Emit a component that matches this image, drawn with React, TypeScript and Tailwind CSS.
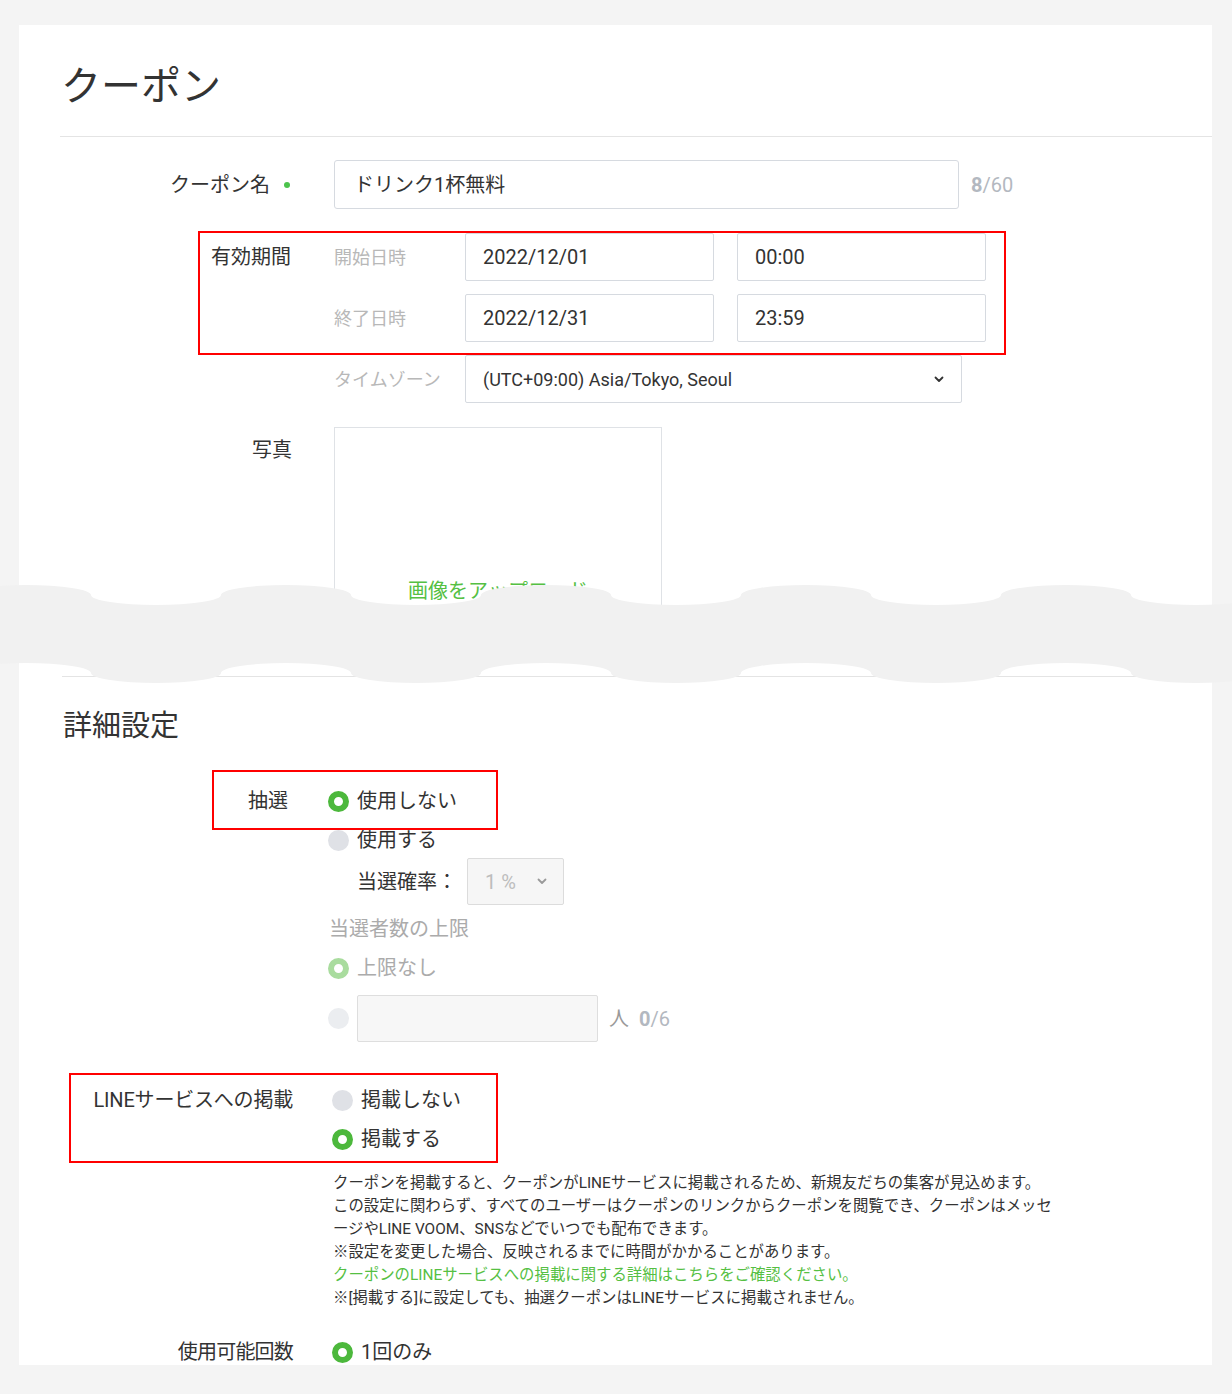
import type { ReactNode } from 'react';

type RadioState = 'on' | 'off' | 'onDisabled' | 'offDisabled';

function Radio({ state }: Readonly<{ state: RadioState }>) {
  const cls = {
    on: 'border-[6px] border-[#4cb83c] bg-white',
    onDisabled: 'border-[6px] border-[#a9dc9e] bg-white',
    off: 'bg-[#dfe1e6]',
    offDisabled: 'bg-[#ebedf0]',
  }[state];
  return <span className={`block w-[21px] h-[21px] shrink-0 rounded-full ${cls}`} />;
}

function RadioRow({ state, label, h, muted }: Readonly<{ state: RadioState; label: string; h: string; muted?: boolean }>) {
  return (
    <div className={`flex items-center ${h}`}>
      <Radio state={state} />
      <span className={`ml-[8px] text-[20px] ${muted ? 'text-[#ababab]' : 'text-[#333]'}`}>{label}</span>
    </div>
  );
}

function Chevron({ color }: Readonly<{ color: string }>) {
  return (
    <svg width="10" height="7" viewBox="0 0 10 7">
      <polyline points="1.5,1.5 5,5 8.5,1.5" fill="none" stroke={color} strokeWidth="1.8" strokeLinecap="round" strokeLinejoin="round" />
    </svg>
  );
}

function Field({ children, w }: Readonly<{ children: ReactNode; w: string }>) {
  return (
    <div className={`${w} h-[48px] flex items-center pl-[17px] border border-[#d6dae0] rounded-[2px] bg-white text-[20px] text-[#333]`}>
      {children}
    </div>
  );
}

// wavy "torn" band drawn across the panel
function TornBand() {
  const xs: number[] = [];
  for (let x = -39; x < 1300; x += 130) xs.push(x);
  let d = 'M -39 15';
  xs.forEach((x, i) => {
    d += ` A 65 10 0 0 ${i % 2 === 0 ? 1 : 0} ${x + 130} 15`;
  });
  const last = xs[xs.length - 1] + 130;
  d += ` L ${last} 93`;
  for (let i = xs.length - 1; i >= 0; i--) {
    d += ` A 65 10 0 0 ${i % 2 === 0 ? 0 : 1} ${xs[i]} 93`;
  }
  d += ' Z';
  return (
    <svg className="absolute left-0 top-[580px]" width="1232" height="105" viewBox="0 0 1232 105">
      <path d={d} fill="#f1f1f1" />
    </svg>
  );
}

const NOTES = [
  'クーポンを掲載すると、クーポンがLINEサービスに掲載されるため、新規友だちの集客が見込めます。',
  'この設定に関わらず、すべてのユーザーはクーポンのリンクからクーポンを閲覧でき、クーポンはメッセ',
  'ージやLINE VOOM、SNSなどでいつでも配布できます。',
  '※設定を変更した場合、反映されるまでに時間がかかることがあります。',
  'クーポンのLINEサービスへの掲載に関する詳細はこちらをご確認ください。',
  '※[掲載する]に設定しても、抽選クーポンはLINEサービスに掲載されません。',
];

export default function App() {
  return (
    <div className="relative w-[1232px] h-[1394px] bg-[#f4f4f4] pt-[25px] font-[Roboto,'Noto_Sans_CJK_JP',sans-serif] text-[#333]">
      <div className="ml-[19px] w-[1193px] bg-white">
        {/* upper part */}
        <div className="h-[615px] overflow-hidden">
          <div className="pt-[38px] pl-[42px] text-[40px] leading-[48px] text-[#333]">クーポン</div>
          <div className="mt-[25px] ml-[41px] h-px bg-[#e4e4e4]" />

          <div className="mt-[23px] flex items-center">
            <div className="w-[273px] pr-[2px] flex justify-end items-center">
              <span className="text-[20px]">クーポン名</span>
              <span className="ml-[14px] w-[6px] h-[6px] rounded-full bg-[#4cc34c]" />
            </div>
            <div className="ml-[42px] w-[625px] h-[49px] flex items-center pl-[19px] border border-[#d6dae0] rounded-[3px] text-[20px]">
              ドリンク1杯無料
            </div>
            <div className="ml-[12px] text-[20px] text-[#b3b8c0]">
              <span className="font-bold">8</span>/60
            </div>
          </div>

          <div className="mt-[24px] flex">
            <div className="w-[273px] pr-[1px] text-right text-[20px] leading-[48px]">有効期間</div>
            <div className="ml-[42px] flex flex-col gap-[13px]">
              <div className="flex items-center">
                <div className="w-[131px] text-[18px] text-[#b8b8b8]">開始日時</div>
                <Field w="w-[249px]">2022/12/01</Field>
                <div className="ml-[23px]">
                  <Field w="w-[249px]">00:00</Field>
                </div>
              </div>
              <div className="flex items-center">
                <div className="w-[131px] text-[18px] text-[#b8b8b8]">終了日時</div>
                <Field w="w-[249px]">2022/12/31</Field>
                <div className="ml-[23px]">
                  <Field w="w-[249px]">23:59</Field>
                </div>
              </div>
              <div className="flex items-center">
                <div className="w-[131px] text-[18px] text-[#b8b8b8]">タイムゾーン</div>
                <div className="w-[497px] h-[48px] flex items-center justify-between pl-[17px] pr-[17px] border border-[#d6dae0] rounded-[2px] text-[18px]">
                  <span>(UTC+09:00) Asia/Tokyo, Seoul</span>
                  <Chevron color="#333" />
                </div>
              </div>
            </div>
          </div>

          <div className="mt-[24px] flex items-start">
            <div className="w-[273px] mt-[9px] text-right text-[20px] leading-[28px]">写真</div>
            <div className="ml-[42px] w-[328px] h-[260px] border border-[#dfe2e6] flex justify-center pt-[149px]">
              <span className="text-[20px] leading-[28px] text-[#55c043]">画像をアップロード</span>
            </div>
          </div>
        </div>

        {/* lower part */}
        <div className="h-[725px] overflow-hidden pt-[36px]">
          <div className="ml-[43px] h-px bg-[#e4e4e4]" />
          <div className="mt-[29px] pl-[44px] text-[29px] leading-[40px]">詳細設定</div>

          <div className="mt-[34px] flex">
            <div className="w-[269px] text-right text-[20px] leading-[42px]">抽選</div>
            <div className="ml-[40px] flex flex-col">
              <RadioRow state="on" label="使用しない" h="h-[42px]" />
              <RadioRow state="off" label="使用する" h="h-[36px]" />
              <div className="h-[47px] flex items-center pl-[29px]">
                <span className="text-[20px]">当選確率：</span>
                <div className="ml-[10px] w-[97px] h-[47px] flex items-center justify-between pl-[17px] pr-[16px] bg-[#f6f6f6] border border-[#dcdcdc] rounded-[2px]">
                  <span className="text-[20px] text-[#bdbdbd]">1 %</span>
                  <Chevron color="#9a9a9a" />
                </div>
              </div>
              <div className="mt-[10px] ml-[1px] text-[20px] leading-[28px] text-[#ababab]">当選者数の上限</div>
              <div className="mt-[5px]">
                <RadioRow state="onDisabled" label="上限なし" h="h-[40px]" muted />
              </div>
              <div className="mt-[7px] flex items-center">
                <Radio state="offDisabled" />
                <div className="ml-[8px] w-[241px] h-[47px] bg-[#f7f7f7] border border-[#dedede] rounded-[2px]" />
                <span className="ml-[11px] text-[20px] text-[#9a9a9a]">人</span>
                <span className="ml-[10px] text-[20px] text-[#b3b8c0]">
                  <span className="font-bold">0</span>/6
                </span>
              </div>
            </div>
          </div>

          <div className="mt-[38px] flex">
            <div className="w-[274px] text-right text-[20px] leading-[40px] tracking-[-0.2px]">LINEサービスへの掲載</div>
            <div className="ml-[39px] flex flex-col">
              <RadioRow state="off" label="掲載しない" h="h-[40px]" />
              <RadioRow state="on" label="掲載する" h="h-[38px]" />
            </div>
          </div>

          <div className="mt-[14px] ml-[314px] text-[15.4px] leading-[23px]">
            {NOTES.map((line, i) => (
              <div key={line} className={`whitespace-nowrap ${i === 4 ? 'text-[#55c043]' : 'text-[#333]'}`}>
                {line}
              </div>
            ))}
          </div>

          <div className="mt-[22px] flex items-center h-[40px]">
            <div className="w-[274px] text-right text-[20px] tracking-[-0.8px]">使用可能回数</div>
            <div className="ml-[39px]">
              <RadioRow state="on" label="1回のみ" h="h-[40px]" />
            </div>
          </div>
        </div>
      </div>

      <TornBand />

      {/* red annotation frames */}
      <div className="absolute left-[198px] top-[231px] w-[808px] h-[124px] border-2 border-[#f00]" />
      <div className="absolute left-[212px] top-[770px] w-[286px] h-[60px] border-2 border-[#f00]" />
      <div className="absolute left-[69px] top-[1073px] w-[429px] h-[90px] border-2 border-[#f00]" />
    </div>
  );
}
